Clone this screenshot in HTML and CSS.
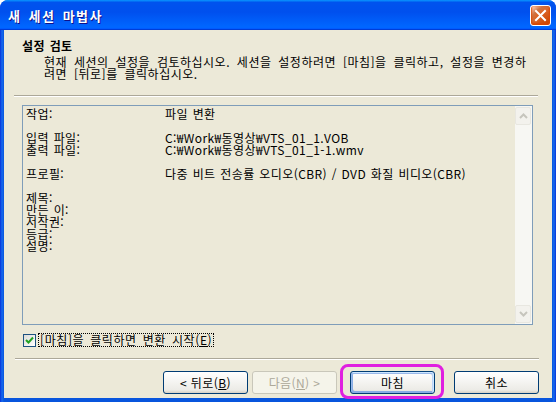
FILE: index.html
```html
<!DOCTYPE html>
<html lang="ko">
<head>
    <meta charset="UTF-8">
    <title>새 세션 마법사</title>
    <link rel="stylesheet" href="styles.css">
</head>
<body>
    <div class="window">
        <!-- Title bar -->
        <div class="title-bar">
            <span class="title-text">새 세션 마법사</span>
            <button class="close-button" aria-label="닫기">
                <svg width="13" height="13" viewBox="0 0 13 13">
                    <path d="M2 2 L11 11 M11 2 L2 11" stroke="#fff" stroke-width="2" stroke-linecap="square"/>
                </svg>
            </button>
        </div>

        <div class="client">
            <div class="header">
                <div class="header-title">설정 검토</div>
                <div class="header-desc">현재 세션의 설정을 검토하십시오. 세션을 설정하려면 [마침]을 클릭하고, 설정을 변경하<br>려면 [뒤로]를 클릭하십시오.</div>
            </div>
            <div class="separator"></div>

            <!-- Summary text box -->
            <div class="summary">
                <div class="summary-text">
                    <div class="row"><span>작업:</span><span>파일 변환</span></div>
                    <div class="row blank"></div>
                    <div class="row"><span>입력 파일:</span><span>C:₩Work₩동영상₩VTS_01_1.VOB</span></div>
                    <div class="row"><span>출력 파일:</span><span>C:₩Work₩동영상₩VTS_01_1-1.wmv</span></div>
                    <div class="row blank"></div>
                    <div class="row"><span>프로필:</span><span>다중 비트 전송률 오디오(CBR) / DVD 화질 비디오(CBR)</span></div>
                    <div class="row blank"></div>
                    <div class="row"><span>제목:</span><span></span></div>
                    <div class="row"><span>만든 이:</span><span></span></div>
                    <div class="row"><span>저작권:</span><span></span></div>
                    <div class="row"><span>등급:</span><span></span></div>
                    <div class="row"><span>설명:</span><span></span></div>
                </div>
                <div class="scrollbar">
                    <div class="scroll-btn">
                        <svg width="9" height="6" viewBox="0 0 9 6"><path d="M1 5 L4.5 1.5 L8 5" fill="none" stroke="#c6c5bd" stroke-width="2"/></svg>
                    </div>
                    <div class="scroll-track"></div>
                    <div class="scroll-btn">
                        <svg width="9" height="6" viewBox="0 0 9 6"><path d="M1 1 L4.5 4.5 L8 1" fill="none" stroke="#c6c5bd" stroke-width="2"/></svg>
                    </div>
                </div>
            </div>

            <label class="check-row">
                <span class="checkbox">
                    <svg width="9" height="9" viewBox="0 0 9 9"><path d="M1 4 L3.5 6.5 L8 1.5" fill="none" stroke="#21a121" stroke-width="2"/></svg>
                </span>
                <span class="check-label">[마침]을 클릭하면 변환 시작(<u>E</u>)</span>
            </label>

            <div class="separator bottom"></div>

            <div class="buttons">
                <button class="btn">&lt; 뒤로(<u>B</u>)</button>
                <button class="btn" disabled>다음(<u>N</u>) &gt;</button>
                <span class="highlight"><button class="btn default">마침</button></span>
                <button class="btn">취소</button>
            </div>
        </div>
    </div>
</body>
</html>
```

FILE: styles.css
```css
body {
    margin: 0;
    background: #fff;
    font-family: "Noto Sans CJK KR", "DejaVu Sans", sans-serif;
    font-size: 12px;
    letter-spacing: 0.4px;
}

/* Window frame */
.window {
    width: 556px;
    height: 402px;
    display: flex;
    flex-direction: column;
    background: linear-gradient(90deg, #0831d9 0, #166aee 2px, #0855dd 4px, #0855dd 552px, #166aee 554px, #0831d9 556px);
    border-radius: 8px 8px 0 0;
    overflow: hidden;
}

.title-bar {
    height: 30px;
    flex: none;
    display: flex;
    align-items: center;
    justify-content: space-between;
    padding: 0 5px 0 8px;
    background: linear-gradient(180deg, #0997ff, #0053ee 8%, #0050ee 40%, #06f 88%, #06f 93%, #005bff 95%, #003dd7 96%, #003dd7);
}

.title-text {
    color: #fff;
    font-weight: bold;
    font-size: 13px;
    word-spacing: 2px;
    letter-spacing: 1.5px;
    text-shadow: 1px 1px #0f1089;
}

.close-button {
    width: 21px;
    height: 21px;
    padding: 0;
    display: flex;
    align-items: center;
    justify-content: center;
    border: 1px solid #fff;
    border-radius: 3px;
    background: radial-gradient(circle at 90% 90%, #cc4600 0, #dc6527 55%, #cd7546 70%, #ffccb2 90%, #fff);
    box-shadow: inset 0 -1px 2px 1px #da4600;
}

/* Client area */
.client {
    flex: 1;
    margin: 0 4px 4px;
    background: #ece9d8;
    display: flex;
    flex-direction: column;
}

.header {
    height: 65px;
    box-sizing: border-box;
    padding: 8px 0 0 18px;
    flex: none;
}

.header-title {
    font-weight: bold;
    line-height: 15px;
    word-spacing: 1px;
}

.header-desc {
    margin-top: 3px;
    padding-left: 22px;
    line-height: 12px;
    word-spacing: 3px;
    letter-spacing: 0.5px;
}

.separator {
    height: 0;
    margin: 0 14px 0 10px;
    border-top: 1px solid #aca899;
    border-bottom: 1px solid #fff;
    flex: none;
}

.separator.bottom {
    margin: 11px 13px 0 11px;
}

/* Summary box */
.summary {
    margin: 8px 19px 0 18px;
    height: 220px;
    box-sizing: border-box;
    border: 1px solid #7f9db9;
    display: flex;
    flex: none;
}

.summary-text {
    flex: 1;
    padding: 2px 0 0 3px;
}

.row {
    display: grid;
    grid-template-columns: 139px 1fr;
    height: 12px;
    line-height: 12px;
    white-space: nowrap;
    word-spacing: 1px;
}

.scrollbar {
    width: 17px;
    display: flex;
    flex-direction: column;
    background: #f7f7f3;
    padding: 1px 1px 1px 0;
    box-sizing: border-box;
}

.scroll-btn {
    height: 16px;
    flex: none;
    display: flex;
    align-items: center;
    justify-content: center;
    border: 1px solid #e8e7e0;
    border-radius: 2px;
    background: #f3f2ed;
}

.scroll-track {
    flex: 1;
}

/* Checkbox */
.check-row {
    display: flex;
    align-items: center;
    gap: 2px;
    margin: 8px 0 0 19px;
    height: 14px;
    flex: none;
}

.checkbox {
    width: 11px;
    height: 11px;
    border: 1px solid #1c5180;
    background: linear-gradient(135deg, #dcdcd7, #fff);
    display: flex;
    align-items: center;
    justify-content: center;
}

.check-label {
    border: 1px dotted #000;
    padding: 0 1px;
    line-height: 12px;
    letter-spacing: 0.6px;
    word-spacing: 2px;
}

/* Buttons */
.buttons {
    display: flex;
    justify-content: flex-end;
    align-items: center;
    margin-top: 11px;
    padding-right: 13px;
    flex: none;
}

.btn {
    width: 85px;
    height: 23px;
    padding: 0;
    font-family: inherit;
    font-size: 12px;
    letter-spacing: 0.4px;
    color: #000;
    border: 1px solid #003c74;
    border-radius: 3px;
    background: linear-gradient(180deg, #fff, #ecebe6 86%, #d6d0c5);
    margin-left: 4px;
}

.btn:disabled {
    color: #aca899;
    border-color: #c9c7ba;
    background: #f5f4ea;
}

.btn.default {
    box-shadow: inset -1px 1px #cee7ff, inset 1px 2px #98b8ea, inset -2px 2px #bcd4f6, inset 1px -1px #89ade4, inset 2px -2px #89ade4;
}

.highlight {
    position: relative;
    margin: 0 15px 0 13px;
    display: flex;
}

.highlight .btn {
    margin-left: 0;
}

.highlight::after {
    content: "";
    position: absolute;
    left: -10px;
    right: -9px;
    top: -7px;
    bottom: -5px;
    border: 3px solid #e020e0;
    border-radius: 8px;
}
```
